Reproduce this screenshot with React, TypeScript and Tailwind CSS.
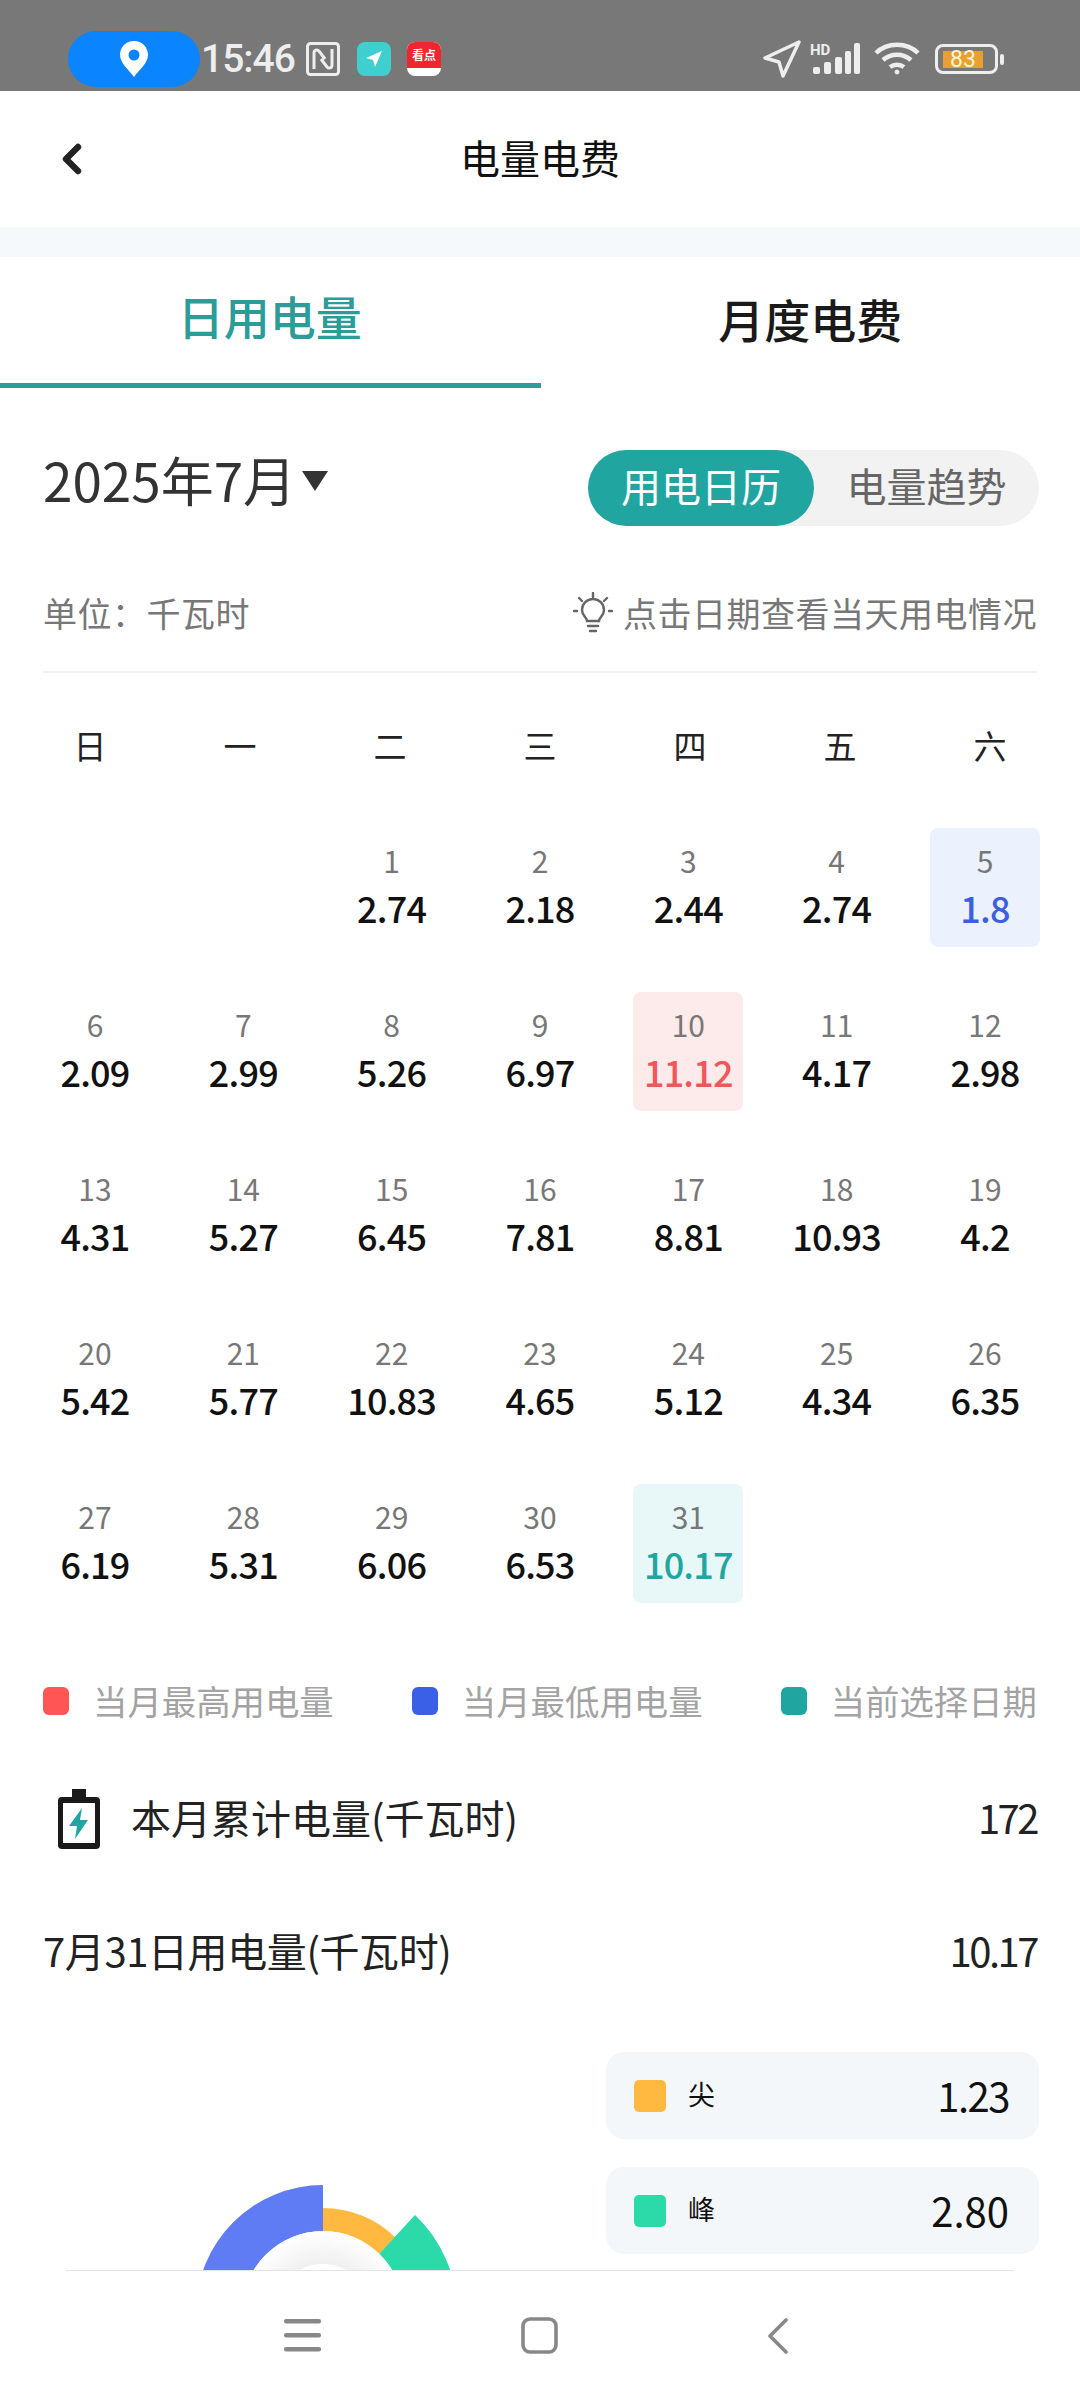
import { ChevronLeft } from "lucide-react";

const VALUES = [
  "2.74", "2.18", "2.44", "2.74", "1.8", "2.09", "2.99", "5.26", "6.97", "11.12", "4.17",
  "2.98", "4.31", "5.27", "6.45", "7.81", "8.81", "10.93", "4.2", "5.42", "5.77", "10.83",
  "4.65", "5.12", "4.34", "6.35", "6.19", "5.31", "6.06", "6.53", "10.17",
];
const WEEK = ["日", "一", "二", "三", "四", "五", "六"];
const LOW = 5;
const HIGH = 10;
const SELECTED = 31;

function StatusBar() {
  return (
    <div className="flex h-[91px] shrink-0 items-center bg-[#787878] pl-[68px] pt-[27px] text-[#eeeeee]">
      <div className="flex h-[56px] w-[132px] items-center justify-center rounded-full bg-[#0a84ff]">
        <svg width="28" height="36" viewBox="0 0 28 36">
          <path d="M14 0C6 0 0 6 0 14c0 8 9 15 14 22 5-7 14-14 14-22C28 6 22 0 14 0z" fill="#fff" />
          <circle cx="14" cy="14" r="5.5" fill="#0a84ff" />
        </svg>
      </div>
      <span className="ml-[1px] w-[95px] text-[39px] font-medium leading-none tracking-[-1px] font-['Roboto',sans-serif]">15:46</span>
      <svg className="ml-[10px]" width="34" height="34" viewBox="0 0 34 34" fill="none" stroke="#eeeeee" strokeWidth="3">
        <rect x="1.5" y="1.5" width="31" height="31" rx="3" />
        <path d="M8 27V11c0-3 3-4 5-2l6 8M26 7v16c0 3-3 4-5 2l-6-8" />
      </svg>
      <div className="ml-[17px] flex h-[34px] w-[34px] items-center justify-center rounded-[8px] bg-[#3fcfcf]">
        <svg width="18" height="18" viewBox="0 0 18 18"><path d="M17 1 1 8l7 2 2 7z" fill="#fff" /></svg>
      </div>
      <div className="ml-[16px] flex h-[34px] w-[34px] flex-col overflow-hidden rounded-[8px] bg-white">
        <div className="flex h-[26px] items-center justify-center bg-[#f0262e] text-[12px] font-bold leading-none text-white">看点</div>
      </div>
      <svg className="ml-auto" width="38" height="38" viewBox="0 0 38 38" fill="none" stroke="#eeeeee" strokeWidth="3.5" strokeLinejoin="round">
        <path d="M36 2 2 18l14 4 4 14z" />
      </svg>
      <div className="relative ml-[11px] h-[32px] w-[50px]">
        <span className="absolute left-[-2px] top-[0px] text-[15px] font-bold leading-none font-['Roboto',sans-serif]">HD</span>
        <svg className="absolute left-0 top-0" width="50" height="32" viewBox="0 0 50 32" fill="#eeeeee">
          <rect x="1" y="24" width="7" height="7" rx="2" />
          <rect x="12" y="19" width="7" height="12" rx="2" />
          <rect x="23" y="14" width="7" height="17" rx="2" />
          <rect x="33" y="8" width="6" height="23" rx="2" />
          <rect x="42" y="0" width="6" height="31" rx="2" />
        </svg>
      </div>
      <svg className="ml-[12px]" width="46" height="34" viewBox="0 0 46 34" fill="none" stroke="#eeeeee" strokeWidth="4.5">
        <path d="M2 11C13 0 33 0 44 11" />
        <path d="M9 18c8-7 20-7 28 0" />
        <path d="M16 25c4-3 10-3 14 0" />
        <circle cx="23" cy="30" r="2" fill="#eeeeee" strokeWidth="1" />
      </svg>
      <div className="ml-[15px] flex h-[30px] w-[63px] items-center rounded-[8px] border-[3px] border-[#eeeeee] pl-[5px]">
        <div className="flex h-[17px] w-[40px] items-center justify-center bg-[#e8a030] text-[23px] leading-none text-[#fff4d8] font-['Roboto',sans-serif]">83</div>
      </div>
      <div className="ml-[2px] mr-[76px] h-[11px] w-[4px] rounded-full bg-[#eeeeee]" />
    </div>
  );
}

function DayCell({ day }: { day: number }) {
  const bg = day === LOW ? "bg-[#ebf1fd]" : day === HIGH ? "bg-[#fdeaea]" : day === SELECTED ? "bg-[#e8f8f8]" : "";
  const color = day === LOW ? "text-[#3b5fe0]" : day === HIGH ? "text-[#f0565a]" : day === SELECTED ? "text-[#21a5a0]" : "text-[#111111]";
  return (
    <div className={`flex h-[119px] w-[110px] flex-col items-center rounded-[8px] pt-[13px] ${bg}`}>
      <span className="h-[38px] text-[30px] leading-[38px] text-[#777777]">{day}</span>
      <span className={`mt-[8px] h-[40px] text-[36px] font-medium leading-[40px] tracking-[-0.8px] ${color}`}>{VALUES[day - 1]}</span>
    </div>
  );
}

function LegendItem({ color, label }: { color: string; label: string }) {
  return (
    <div className="flex items-center gap-[24px]">
      <span className={`h-[28px] w-[26px] rounded-[6px] ${color}`} />
      <span className="pb-[3px] text-[34.4px] leading-[40px] text-[#a3a3a3]">{label}</span>
    </div>
  );
}

function Donut() {
  // centre of the ring sits below the fold, the nav bar cuts it off
  return (
    <svg width="606" height="330" viewBox="0 0 606 330">
      <defs>
        <radialGradient id="ringShade" cx="323" cy="260" r="81" gradientUnits="userSpaceOnUse">
          <stop offset="0.6" stopColor="#f0f0f0" />
          <stop offset="1" stopColor="#ffffff" />
        </radialGradient>
      </defs>
      <path d="M323 133A127 127 0 1 0 323 387V341A81 81 0 1 1 323 179z" fill="#5f7cf4" />
      <path d="M323 156A104 104 0 0 1 395 185L379 202A81 81 0 0 0 323 179z" fill="#ffb840" />
      <path d="M415 163A134 134 0 0 1 457 260H404A81 81 0 0 0 379 202z" fill="#2bd9a9" />
      <circle cx="323" cy="260" r="81" fill="url(#ringShade)" />
      <circle cx="323" cy="260" r="48" fill="#ffffff" />
    </svg>
  );
}

function PriceRow({ color, label, value, valueClass }: { color: string; label: string; value: string; valueClass: string }) {
  return (
    <div className="flex h-[87px] items-center rounded-[18px] bg-[#f4f7fa] pl-[28px] pr-[30px]">
      <span className={`h-[32px] w-[32px] rounded-[5px] ${color}`} />
      <span className="ml-[22px] pb-[2px] text-[27px] text-[#111111]">{label}</span>
      <span className={`ml-auto pb-[2px] text-[40px] leading-none text-[#111111] ${valueClass}`}>{value}</span>
    </div>
  );
}

export default function App() {
  const blanks = [0, 1];
  const days = VALUES.map((_, i) => i + 1);
  return (
    <div className="flex h-[2400px] w-[1080px] flex-col overflow-hidden bg-white font-['Noto_Sans_CJK_SC',sans-serif]">
      <StatusBar />

      <div className="relative flex h-[136px] shrink-0 items-center justify-center pb-[5px]">
        <ChevronLeft className="absolute left-[48px] top-[44px]" size={48} strokeWidth={3.2} color="#222222" />
        <span className="text-[40px] leading-none text-[#111111]">电量电费</span>
      </div>
      <div className="h-[30px] shrink-0 bg-[#f6f9fc]" />

      <div className="flex-1 overflow-hidden">
        <div className="flex h-[131px]">
          <div className="flex flex-1 items-center justify-center border-b-[5px] border-[#2b9c97] pb-[10px] pr-[1px] text-[46px] font-medium leading-none text-[#2b9c97]">日用电量</div>
          <div className="flex flex-1 items-center justify-center pb-[10px] text-[46px] font-medium leading-none text-[#1a1a1a]">月度电费</div>
        </div>

        <div className="mt-[62px] flex items-center justify-between pl-[43px] pr-[41px]">
          <div className="flex items-center pb-[17px]">
            <span className="text-[53px] leading-none text-[#333333]">2025年7月</span>
            <svg className="ml-[5px] mt-[2px]" width="28" height="20" viewBox="0 0 28 20"><path d="M1 0h26L14 20z" fill="#333333" /></svg>
          </div>
          <div className="flex h-[76px] w-[451px] rounded-full bg-[#f2f2f2] text-[40px] leading-none">
            <div className="flex w-[226px] items-center justify-center rounded-full bg-[#21a5a0] pb-[6px] text-white">用电日历</div>
            <div className="flex flex-1 items-center justify-center pb-[6px] text-[#666666]">电量趋势</div>
          </div>
        </div>

        <div className="mt-[62px] flex h-[50px] items-center justify-between px-[43px] text-[34px] leading-none text-[#777777]">
          <span className="tracking-[0.5px]">单位：千瓦时</span>
          <div className="flex items-center gap-[10px]">
            <svg width="40" height="42" viewBox="0 0 40 42" fill="none" stroke="#666666" strokeWidth="2.4" strokeLinecap="round">
              <path d="M20 1v4M6 6l3 3M34 6l-3 3M1 19h3M36 19h3" />
              <path d="M14 29c0-4-5-5-5-11a11 11 0 0 1 22 0c0 6-5 7-5 11z" />
              <path d="M15 34h10M17 39h6" />
            </svg>
            <span className="tracking-[0.5px]">点击日期查看当天用电情况</span>
          </div>
        </div>

        <div className="mx-[43px] mt-[33px] h-[2px] bg-[#f2f2f2]" />

        <div className="mx-[15px] mt-[47px] grid h-[50px] grid-cols-7 pb-[2px] text-center text-[33px] leading-[50px] text-[#222222]">
          {WEEK.map((w) => <span key={w}>{w}</span>)}
        </div>

        <div className="mx-[40px] mt-[58px] grid grid-cols-[repeat(7,110px)] justify-between gap-y-[45px]">
          {blanks.map((b) => <div key={b} />)}
          {days.map((d) => <DayCell key={d} day={d} />)}
        </div>

        <div className="mt-[78px] flex h-[40px] items-center justify-between px-[43px]">
          <LegendItem color="bg-[#ff5555]" label="当月最高用电量" />
          <LegendItem color="bg-[#3a60e8]" label="当月最低用电量" />
          <LegendItem color="bg-[#21a5a0]" label="当前选择日期" />
        </div>

        <div className="mt-[68px] flex h-[60px] items-center px-[43px] text-[40px] leading-none text-[#222222]">
          <svg className="ml-[15px]" width="42" height="60" viewBox="0 0 42 60">
            <path d="M14 0h14v8h10a4 4 0 0 1 4 4v44a4 4 0 0 1-4 4H4a4 4 0 0 1-4-4V12a4 4 0 0 1 4-4h10z" fill="#1a1a1a" />
            <rect x="5" y="14" width="32" height="40" fill="#ffffff" />
            <path d="M24 19 11 37h8l-2 13 13-19h-8z" fill="#21a5a0" />
          </svg>
          <span className="ml-[31px] pb-[5px]">本月累计电量(千瓦时)</span>
          <span className="ml-auto pb-[5px] tracking-[-2.5px]">172</span>
        </div>

        <div className="mt-[73px] flex h-[60px] items-center justify-between px-[43px] pb-[5px] text-[40px] leading-none text-[#222222]">
          <span className="tracking-[-0.4px]">7月31日用电量(千瓦时)</span>
          <span className="tracking-[-2.5px]">10.17</span>
        </div>

        <div className="mt-[70px] flex">
          <div className="w-[606px]"><Donut /></div>
          <div className="flex w-[433px] flex-col gap-[28px]">
            <PriceRow color="bg-[#ffb840]" label="尖" value="1.23" valueClass="tracking-[-1.5px]" />
            <PriceRow color="bg-[#2bd9a9]" label="峰" value="2.80" valueClass="" />
          </div>
        </div>
      </div>

      <div className="h-[130px] shrink-0 bg-white px-[66px]">
        <div className="h-[1px] bg-[#e5e5e5]" />
        <div className="relative flex h-[129px] items-start">
          <svg className="ml-[218px] mt-[47px]" width="37" height="35" viewBox="0 0 37 35" fill="#888888">
            <rect width="37" height="4.5" y="1" rx="2" />
            <rect width="37" height="4.5" y="15" rx="2" />
            <rect width="37" height="4.5" y="29" rx="2" />
          </svg>
          <svg className="ml-[200px] mt-[46px]" width="37" height="37" viewBox="0 0 37 37" fill="none" stroke="#888888" strokeWidth="3.6">
            <rect x="2" y="2" width="33" height="33" rx="7" />
          </svg>
          <svg className="ml-[209px] mt-[47px]" width="21" height="36" viewBox="0 0 21 36" fill="none" stroke="#888888" strokeWidth="3.6" strokeLinecap="round" strokeLinejoin="round">
            <path d="M19 2 3 18l16 16" />
          </svg>
        </div>
      </div>
    </div>
  );
}
